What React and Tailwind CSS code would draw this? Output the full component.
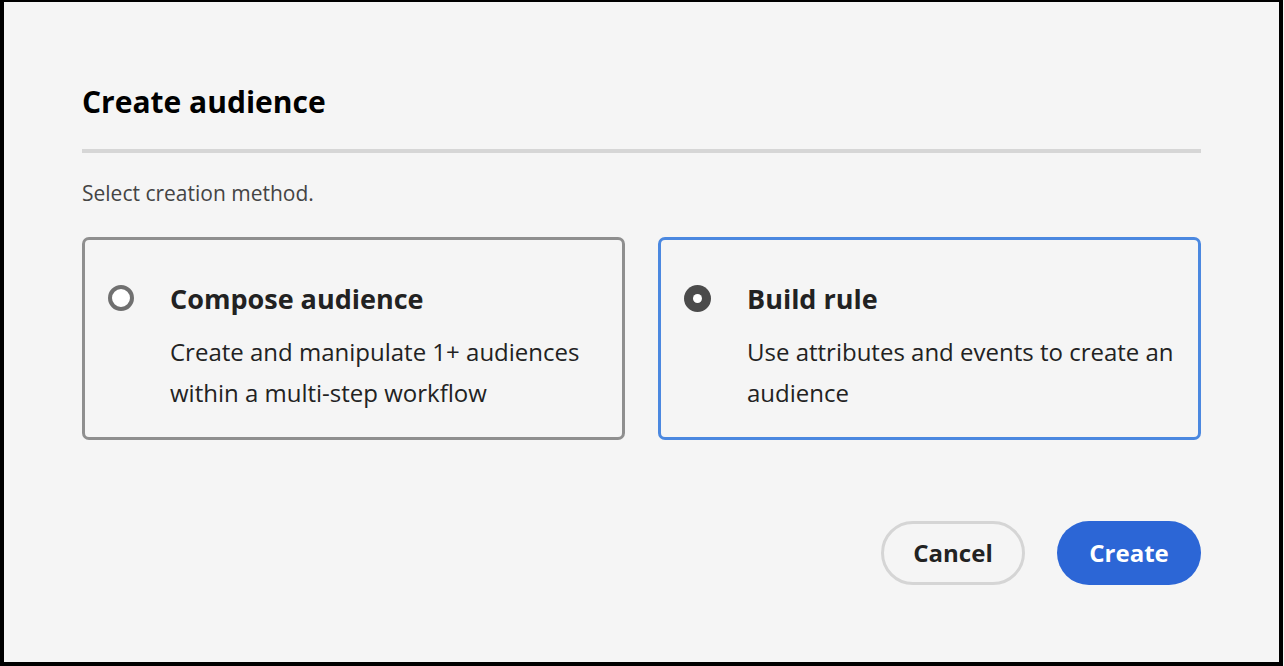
import React from 'react';

const font = { fontFamily: '"Open Sans", "Noto Sans", sans-serif' };

function Radio({ checked }) {
  if (checked) {
    return (
      <span className="flex h-[27px] w-[27px] shrink-0 items-center justify-center rounded-full bg-[#4b4b4b]">
        <span className="h-[9px] w-[9px] rounded-full bg-white" />
      </span>
    );
  }
  return <span className="h-[26px] w-[26px] shrink-0 rounded-full border-[4px] border-[#707070] bg-white" />;
}

function MethodCard({ title, desc, selected }) {
  return (
    <div
      className={`flex h-[203px] flex-1 items-start gap-[36px] rounded-[7px] border-[3px] pl-[23px] pr-[20px] pt-[45px] ${
        selected ? 'border-[#4b88e0]' : 'border-[#8f8f8f]'
      }`}
    >
      <Radio checked={selected} />
      <div className="-mt-[3px]">
        <h2 className="text-[27px] font-bold leading-[34px] text-[#222]">{title}</h2>
        <p className="mt-[15px] text-[24px] leading-[41px] text-[#222]">{desc}</p>
      </div>
    </div>
  );
}

export default function App() {
  return (
    <div className="h-[666px] w-[1284px] bg-[#f5f5f5]" style={font}>
      <div className="h-[666px] w-[1283px] border-b-4 border-l-4 border-r-4 border-t-2 border-black pl-[78px] pr-[78px] pt-[80px]">
        <h1 className="text-[30px] font-bold leading-[40px] text-black">Create audience</h1>
        <div className="mt-[27px] h-[4px] bg-[#d6d6d6]" />
        <p className="mt-[26px] text-[21px] leading-[28px] text-[#444]">Select creation method.</p>
        <div className="mt-[30px] flex gap-[33px]">
          <MethodCard
            title="Compose audience"
            desc={<>Create and manipulate 1+ audiences<br />within a multi-step workflow</>}
          />
          <MethodCard
            selected
            title="Build rule"
            desc={<>Use attributes and events to create an<br />audience</>}
          />
        </div>
        <div className="mt-[81px] flex justify-end gap-[32px]">
          <button className="h-[64px] w-[144px] rounded-full border-[3px] border-[#d5d5d5] text-[24px] font-bold text-[#222]">
            Cancel
          </button>
          <button className="h-[64px] w-[144px] rounded-full bg-[#2c66d6] text-[24px] font-bold text-white">
            Create
          </button>
        </div>
      </div>
    </div>
  );
}
